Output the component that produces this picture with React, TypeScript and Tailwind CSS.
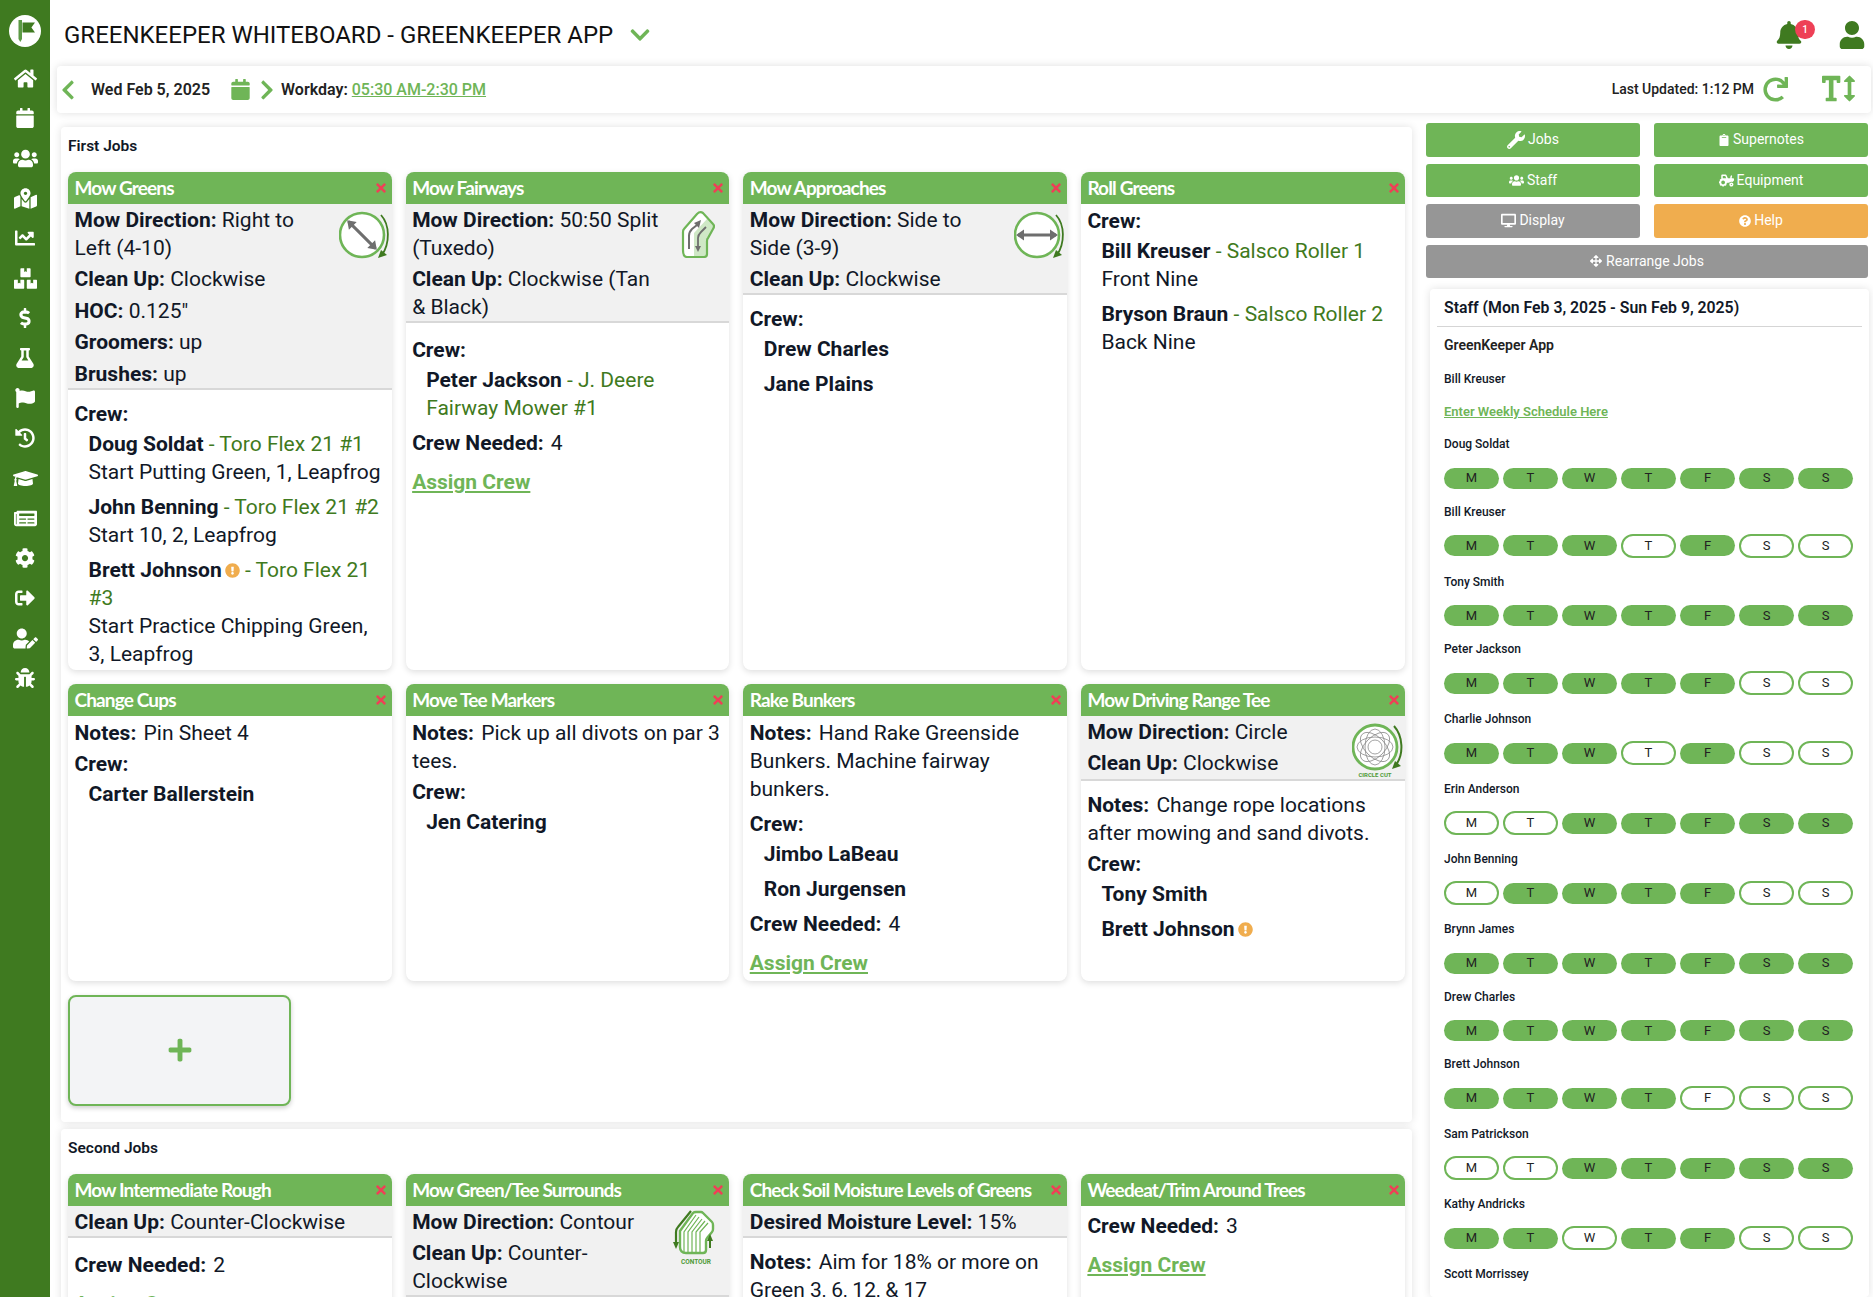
import type { ReactNode } from 'react';
import type { IconType } from 'react-icons';
import {
  FaArrowsAlt, FaBell, FaBoxes, FaBug, FaCalendar, FaChartLine, FaChevronDown, FaChevronLeft, FaChevronRight,
  FaClipboard, FaCog, FaDesktop, FaDollarSign, FaExclamationCircle, FaFlag, FaFlask,
  FaGraduationCap, FaHistory, FaHome, FaMapMarkedAlt, FaNewspaper, FaPlus, FaQuestionCircle, FaRedo,
  FaSignOutAlt, FaTextHeight, FaTimes, FaTractor, FaUser, FaUserEdit, FaUsers, FaWrench,
} from 'react-icons/fa';

// wide glyphs get a bigger box so every icon keeps the same height
const navIcons: [IconType, number][] = [
  [FaHome, 23], [FaCalendar, 20], [FaUsers, 25], [FaMapMarkedAlt, 23], [FaChartLine, 20], [FaBoxes, 23],
  [FaDollarSign, 20], [FaFlask, 20], [FaFlag, 20], [FaHistory, 20], [FaGraduationCap, 25], [FaNewspaper, 23],
  [FaCog, 20], [FaSignOutAlt, 20], [FaUserEdit, 25], [FaBug, 20],
];

function Logo() {
  return (
    <svg width="32" height="32" viewBox="0 0 32 32">
      <circle cx="16" cy="16" r="16" fill="#fff" />
      <path d="M9.5 5h3.5v19l-1.7 3-1.8-3z" fill="#5c9a45" />
      <path d="M13.5 7.5H26l-3.6 5 3.6 5H13.5z" fill="#3f7a20" />
    </svg>
  );
}

function DirectionDial({ angle }: { angle: number }) {
  return (
    <svg width="52" height="50" viewBox="0 0 52 50">
      <circle cx="23" cy="24" r="22" fill="#fff" stroke="#6fb557" strokeWidth="2.6" />
      <g transform={`rotate(${angle} 23 24)`}>
        <path d="M4 24h38" stroke="#6e6e6e" strokeWidth="3" />
        <path d="M2 24l8-5.5v11zM44 24l-8-5.5v11z" fill="#6e6e6e" />
      </g>
      <path d="M42 4c9 10 9 28 1 40" stroke="#3f7a20" strokeWidth="1.8" fill="none" />
      <path d="M39 47l9-3-6-5z" fill="#3f7a20" />
    </svg>
  );
}

function TuxedoIcon() {
  return (
    <svg width="34" height="47" viewBox="-1 -1 34 47" className="mr-[13px]">
      <path d="M1 38V20q0-2 1-3L15 2q3-3 6-1l10 11q2 2 0 5l-5 9q-1 1-1 3v13q0 3-3 3H5q-4 0-4-7z" fill="#fff" />
      <path d="M12 45V21L25 7l6 5q2 2 0 5l-5 9q-1 1-1 3v13q0 3-3 3z" fill="#cfe8c6" />
      <path d="M1 38V20q0-2 1-3L15 2q3-3 6-1l10 11q2 2 0 5l-5 9q-1 1-1 3v13q0 3-3 3H5q-4 0-4-7z" fill="none" stroke="#6fb557" strokeWidth="2.2" />
      <path d="M7 37V24q0-4 3-7l5-4" stroke="#6e6e6e" strokeWidth="2" fill="none" />
      <path d="M19 8l-2 8-5-5z" fill="#6e6e6e" />
      <path d="M24 15l-5 5q-3 3-3 6v9" stroke="#6e6e6e" strokeWidth="1.8" fill="none" />
      <path d="M16 40l-3-6h6z" fill="#6e6e6e" />
    </svg>
  );
}

function CircleCutIcon() {
  return (
    <svg width="52" height="56" viewBox="0 0 52 56">
      <circle cx="23" cy="24" r="22" fill="#fff" stroke="#6fb557" strokeWidth="2.8" />
      {[0, 45, 90, 135].map((a) => (
        <ellipse key={a} cx="23" cy="24" rx="18" ry="10" fill="none" stroke="#8a8a8a" strokeWidth="0.8" transform={`rotate(${a} 23 24)`} />
      ))}
      <circle cx="23" cy="24" r="7" fill="#fff" stroke="#8a8a8a" strokeWidth="0.8" />
      <path d="M42 3c9 10 10 28 2 39" stroke="#3f7a20" strokeWidth="2" fill="none" />
      <path d="M40 46l9-3-6-5z" fill="#3f7a20" />
      <text x="23" y="54" textAnchor="middle" fontSize="6" fontWeight="700" fill="#4f9a38" fontFamily="Roboto, sans-serif">CIRCLE CUT</text>
    </svg>
  );
}

function ContourIcon() {
  return (
    <svg width="42" height="56" viewBox="0 0 42 56" className="mr-[13px] -mt-[3px]">
      <path d="M7 21L20 3q1-1 3-1h5q1 0 2 1l9 9q1 1 1 3v4q0 2-1 3l-5 6q-1 1-1 3v9q0 3-3 3H13q-6 0-6-6z" fill="#fff" stroke="#6fb557" strokeWidth="2.4" />
      {[0, 1, 2, 3, 4].map((i) => (
        <path key={i} d={`M${11 + i * 4} 43V22L${23 + i * 3} ${5 + i * 2}`} stroke="#6fb557" strokeWidth="1.2" fill="none" />
      ))}
      <path d="M18 1L5 17q-2 2-2 5v12" stroke="#3f7a20" strokeWidth="2.2" fill="none" />
      <path d="M3 39l-3-7h6z" fill="#3f7a20" />
      <path d="M37 38V28" stroke="#3f7a20" strokeWidth="2" fill="none" />
      <path d="M37 24l-3 7h6z" fill="#3f7a20" />
      <text x="23" y="54" textAnchor="middle" fontSize="6.5" fontWeight="700" fill="#4f9a38" fontFamily="Roboto, sans-serif">CONTOUR</text>
    </svg>
  );
}

function Warn() {
  return <FaExclamationCircle className="inline-block text-[#f0ad4e] text-[15px] ml-[3px] mb-[2px] align-middle" />;
}

function Row({ label, children }: { label: string; children: ReactNode }) {
  return (
    <div className="mb-[3.4px] last:mb-0">
      <span className="font-bold">{label}</span> {children}
    </div>
  );
}

function Notes({ children }: { children: ReactNode }) {
  return (
    <div className="mb-[3.4px]">
      <span className="font-bold">Notes:</span> <span className="ml-[2px]">{children}</span>
    </div>
  );
}

function Needed({ n }: { n: number }) {
  return (
    <div className="mt-[3px] mb-[11px]">
      <span className="font-bold">Crew Needed:</span>
      <span className="ml-[7px]">{n}</span>
    </div>
  );
}

function Assign() {
  return <a className="block text-[#6fb557] font-bold underline leading-[28px] mb-[2px]">Assign Crew</a>;
}

function CrewLabel() {
  return <div className="font-bold mb-[2px]">Crew:</div>;
}

function Person({ name, warn, gear, note }: { name: string; warn?: boolean; gear?: string; note?: string }) {
  return (
    <div className="pl-[14px] mb-[7px] last:mb-0">
      <span className="font-bold">{name}</span>
      {warn && <Warn />}
      {gear && <span className="text-[#3f7a20]"> - {gear}</span>}
      {note && <div>{note}</div>}
    </div>
  );
}

function JobCard({ title, top, icon, children }: { title: string; top?: ReactNode; icon?: ReactNode; children: ReactNode }) {
  return (
    <div className="bg-white rounded-lg shadow-[0_2px_6px_rgba(0,0,0,0.13)] text-[21px] leading-[28px] text-[#111827] overflow-hidden">
      <div className="h-[32px] bg-[#6fb557] flex items-center justify-between pl-[6.5px] pr-[4px] text-white text-[19px] tracking-[-0.045em] font-['Lato',sans-serif] font-bold">
        <span className="whitespace-nowrap">{title}</span>
        <FaTimes className="text-[#ee4056] text-[14px] shrink-0" />
      </div>
      {top && (
        <div className="bg-[#f1f1f1] border-b-2 border-[#d8d8d8] flex pt-[2px] pl-[6.5px]">
          <div className="flex-1 min-w-0">{top}</div>
          {icon && <div className="w-[68px] shrink-0 flex justify-end pr-[1px] pt-[5px]">{icon}</div>}
        </div>
      )}
      <div className={top ? 'px-[6.5px] pt-[10px] pb-[2px]' : 'px-[6.5px] pt-[3px] pb-[2px]'}>{children}</div>
    </div>
  );
}

function Section({ title, children, className }: { title: string; children: ReactNode; className?: string }) {
  return (
    <section className={`bg-white rounded shadow-[0_0_8px_rgba(0,0,0,0.12)] pl-[7px] pr-[7.5px] ${className ?? ''}`}>
      <h2 className="text-[15.5px] font-semibold text-[#111827] leading-[20px] pt-[9px] pb-[16px]">{title}</h2>
      {children}
    </section>
  );
}

const days = ['M', 'T', 'W', 'T', 'F', 'S', 'S'];

const staff: [string, number[]][] = [
  ['Doug Soldat', []],
  ['Bill Kreuser', [3, 5, 6]],
  ['Tony Smith', []],
  ['Peter Jackson', [5, 6]],
  ['Charlie Johnson', [3, 5, 6]],
  ['Erin Anderson', [0, 1]],
  ['John Benning', [0, 5, 6]],
  ['Brynn James', []],
  ['Drew Charles', []],
  ['Brett Johnson', [4, 5, 6]],
  ['Sam Patrickson', [0, 1]],
  ['Kathy Andricks', [2, 5, 6]],
];

function StaffRow({ name, off }: { name: string; off: number[] }) {
  return (
    <div>
      <div className="text-[12px] leading-[16px] font-medium text-[#111827]">{name}</div>
      <div className={off.length ? 'flex items-center gap-[4px] mt-[14px] mb-[16px]' : 'flex items-center gap-[4px] mt-[15.5px] mb-[15px]'}>
        {days.map((d, i) =>
          off.includes(i) ? (
            <div key={i} className="w-[55px] h-[24px] rounded-full border-2 border-[#6fb557] bg-white flex items-center justify-center text-[13px] text-[#222]">{d}</div>
          ) : (
            <div key={i} className="w-[55px] h-[21px] rounded-full bg-[#6fb557] flex items-center justify-center text-[13px] text-[#222]">{d}</div>
          ),
        )}
      </div>
    </div>
  );
}

function ActionButton({ icon, label, color }: { icon: ReactNode; label: string; color: string }) {
  return (
    <button className={`h-[33.5px] rounded-[3px] flex items-center justify-center gap-[3px] text-white text-[14px] ${color}`}>
      {icon}
      <span>{label}</span>
    </button>
  );
}

export default function App() {
  return (
    <div className="flex h-screen overflow-hidden bg-white font-['Roboto',sans-serif]">
      {/* Sidebar */}
      <aside className="w-[50px] shrink-0 bg-[#3f7a20] flex flex-col items-center pt-[15px]">
        <div className="mb-[11px]"><Logo /></div>
        {navIcons.map(([Icon, size], i) => (
          <div key={i} className="h-[40px] flex items-center justify-center text-white">
            <Icon size={size} />
          </div>
        ))}
      </aside>

      <div className="flex-1 min-w-0 flex flex-col">
        {/* Header */}
        <header className="h-[66px] shrink-0 flex items-center pt-[4px] pl-[14px] pr-[7px]">
          <h1 className="text-[24px] text-[#111] leading-[32px]">GREENKEEPER WHITEBOARD - GREENKEEPER APP</h1>
          <FaChevronDown className="ml-[16px] text-[#6fb557] text-[22px]" />
          <div className="ml-auto flex items-center text-[#3f7a20]">
            <div className="relative">
              <FaBell className="text-[28px]" />
              <span className="absolute top-[-1px] -right-[12px] w-[20px] h-[19px] rounded-full bg-[#ee4056] text-white text-[10px] font-medium flex items-center justify-center">1</span>
            </div>
            <FaUser className="text-[28px] ml-[35px]" />
          </div>
        </header>

        {/* Toolbar */}
        <div className="h-[47px] shrink-0 ml-[7px] mr-[2px] bg-white rounded shadow-[0_0_8px_rgba(0,0,0,0.13)] flex items-center text-[#222] font-medium">
          <FaChevronLeft className="text-[#6fb557] text-[22px]" />
          <span className="ml-[12px] text-[16px] font-semibold">Wed Feb 5, 2025</span>
          <FaCalendar className="ml-[20px] text-[#6fb557] text-[21px]" />
          <FaChevronRight className="ml-[5px] text-[#6fb557] text-[22px]" />
          <span className="ml-[3px] text-[16px]"><span className="font-semibold">Workday:</span> <a className="text-[#6fb557] underline">05:30 AM-2:30 PM</a></span>
          <span className="ml-auto text-[14px] -mt-[1px]">Last Updated: 1:12 PM</span>
          <FaRedo className="ml-[9px] text-[#6fb557] text-[25px]" />
          <FaTextHeight className="ml-[34px] mr-[16px] text-[#6fb557] text-[33px] -mt-[2px]" />
        </div>

        <div className="flex-1 min-h-0 flex mt-[10px]">
          {/* Job board */}
          <main className="w-[1351px] shrink-0 ml-[11px] mt-[4px] flex flex-col gap-[7px]">
            <Section title="First Jobs" className="h-[995px] shrink-0">
              <div className="grid grid-cols-4 gap-x-[14px] gap-y-[14px]">
                <JobCard
                  title="Mow Greens"
                  icon={<DirectionDial angle={45} />}
                  top={
                    <>
                      <Row label="Mow Direction:">Right to Left (4-10)</Row>
                      <Row label="Clean Up:">Clockwise</Row>
                      <Row label="HOC:">0.125"</Row>
                      <Row label="Groomers:">up</Row>
                      <Row label="Brushes:">up</Row>
                    </>
                  }
                >
                  <CrewLabel />
                  <Person name="Doug Soldat" gear="Toro Flex 21 #1" note="Start Putting Green, 1, Leapfrog" />
                  <Person name="John Benning" gear="Toro Flex 21 #2" note="Start 10, 2, Leapfrog" />
                  <Person name="Brett Johnson" warn gear="Toro Flex 21 #3" note="Start Practice Chipping Green, 3, Leapfrog" />
                </JobCard>

                <JobCard
                  title="Mow Fairways"
                  icon={<TuxedoIcon />}
                  top={
                    <>
                      <Row label="Mow Direction:">50:50 Split (Tuxedo)</Row>
                      <Row label="Clean Up:">Clockwise (Tan &amp; Black)</Row>
                    </>
                  }
                >
                  <div className="pt-[3px]">
                    <CrewLabel />
                    <Person name="Peter Jackson" gear="J. Deere Fairway Mower #1" />
                    <Needed n={4} />
                    <Assign />
                  </div>
                </JobCard>

                <JobCard
                  title="Mow Approaches"
                  icon={<DirectionDial angle={0} />}
                  top={
                    <>
                      <Row label="Mow Direction:">Side to Side (3-9)</Row>
                      <Row label="Clean Up:">Clockwise</Row>
                    </>
                  }
                >
                  <CrewLabel />
                  <Person name="Drew Charles" />
                  <Person name="Jane Plains" />
                </JobCard>

                <JobCard title="Roll Greens">
                  <CrewLabel />
                  <Person name="Bill Kreuser" gear="Salsco Roller 1" note="Front Nine" />
                  <Person name="Bryson Braun" gear="Salsco Roller 2" note="Back Nine" />
                </JobCard>

                <JobCard title="Change Cups">
                  <Notes>Pin Sheet 4</Notes>
                  <CrewLabel />
                  <Person name="Carter Ballerstein" />
                </JobCard>

                <JobCard title="Move Tee Markers">
                  <Notes>Pick up all divots on par 3 tees.</Notes>
                  <CrewLabel />
                  <Person name="Jen Catering" />
                </JobCard>

                <JobCard title="Rake Bunkers">
                  <Notes>Hand Rake Greenside Bunkers. Machine fairway bunkers.</Notes>
                  <div className="pt-[4px]">
                    <CrewLabel />
                    <Person name="Jimbo LaBeau" />
                    <div className="pl-[14px] mb-[7px]"><span className="font-bold">Ron Jurgensen</span></div>
                    <Needed n={4} />
                    <Assign />
                  </div>
                </JobCard>

                <JobCard
                  title="Mow Driving Range Tee"
                  icon={<CircleCutIcon />}
                  top={
                    <>
                      <Row label="Mow Direction:">Circle</Row>
                      <Row label="Clean Up:">Clockwise</Row>
                    </>
                  }
                >
                  <Notes>Change rope locations after mowing and sand divots.</Notes>
                  <CrewLabel />
                  <Person name="Tony Smith" />
                  <Person name="Brett Johnson" warn />
                </JobCard>

                <button className="w-[223px] h-[111px] rounded-lg border-2 border-[#6fb557] bg-[#f3f4f6] shadow-[0_2px_5px_rgba(0,0,0,0.2)] flex items-center justify-center">
                  <FaPlus className="text-[#6fb557] text-[26px]" />
                </button>
              </div>
            </Section>

            <Section title="Second Jobs" className="flex-1">
              <div className="grid grid-cols-4 gap-x-[14px]">
                <JobCard title="Mow Intermediate Rough" top={<Row label="Clean Up:">Counter-Clockwise</Row>}>
                  <Needed n={2} />
                  <Assign />
                </JobCard>
                <JobCard
                  title="Mow Green/Tee Surrounds"
                  icon={<ContourIcon />}
                  top={
                    <>
                      <Row label="Mow Direction:">Contour</Row>
                      <Row label="Clean Up:">Counter-Clockwise</Row>
                    </>
                  }
                >
                  <Needed n={2} />
                </JobCard>
                <JobCard title="Check Soil Moisture Levels of Greens" top={<Row label="Desired Moisture Level:">15%</Row>}>
                  <Notes>Aim for 18% or more on Green 3, 6, 12, &amp; 17</Notes>
                </JobCard>
                <JobCard title="Weedeat/Trim Around Trees">
                  <Needed n={3} />
                  <Assign />
                </JobCard>
              </div>
            </Section>
          </main>

          {/* Right column */}
          <div className="w-[445px] shrink-0 ml-[14px] flex flex-col">
            <div className="grid grid-cols-2 gap-x-[14px] gap-y-[7px] w-[442px]">
              <ActionButton color="bg-[#6fb557]" icon={<FaWrench className="text-[18px]" />} label="Jobs" />
              <ActionButton color="bg-[#6fb557]" icon={<FaClipboard className="text-[12px]" />} label="Supernotes" />
              <ActionButton color="bg-[#6fb557]" icon={<FaUsers className="text-[15px]" />} label="Staff" />
              <ActionButton color="bg-[#6fb557]" icon={<FaTractor className="text-[15px]" />} label="Equipment" />
              <ActionButton color="bg-[#969696]" icon={<FaDesktop className="text-[15px]" />} label="Display" />
              <ActionButton color="bg-[#f0ad4e]" icon={<FaQuestionCircle className="text-[12px]" />} label="Help" />
              <div className="col-span-2">
                <button className="w-full h-[33.5px] rounded-[3px] bg-[#969696] flex items-center justify-center gap-[4px] text-white text-[14px]">
                  <FaArrowsAlt className="text-[12px]" />
                  <span>Rearrange Jobs</span>
                </button>
              </div>
            </div>

            <div className="mt-[11px] ml-[4px] mr-[2px] flex-1 bg-white rounded shadow-[0_0_8px_rgba(0,0,0,0.12)] px-[7px]">
              <div className="h-[38px] border-b border-[#d5d5d5] pl-[7px] flex items-center text-[15.8px] font-semibold text-[#111827]">Staff (Mon Feb 3, 2025 - Sun Feb 9, 2025)</div>
              <div className="pl-[7px]">
                <div className="text-[14px] leading-[16px] font-semibold text-[#222] mt-[10px]">GreenKeeper App</div>
                <div className="text-[12px] leading-[16px] font-medium text-[#111827] mt-[18px]">Bill Kreuser</div>
                <a className="block text-[13px] leading-[16px] font-semibold text-[#6fb557] underline mt-[17px]">Enter Weekly Schedule Here</a>
                <div className="mt-[16px]">
                  {staff.map(([name, off]) => (
                    <StaffRow key={name} name={name} off={off} />
                  ))}
                  <div className="text-[12px] leading-[16px] font-medium text-[#111827]">Scott Morrissey</div>
                </div>
              </div>
            </div>
          </div>
        </div>
      </div>
    </div>
  );
}
